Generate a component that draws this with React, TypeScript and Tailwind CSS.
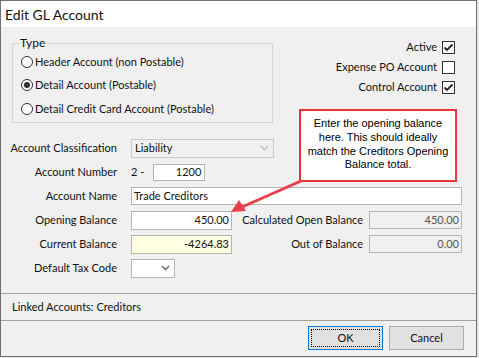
import React from 'react';

const ui = "font-['Lato',sans-serif] text-[11px] text-[#111] whitespace-nowrap";

function Chevron({ color }: { color: string }) {
  return (
    <svg width="9" height="6" viewBox="0 0 9 6" className="shrink-0">
      <path d="M1 1 L4.5 4.5 L8 1" fill="none" stroke={color} strokeWidth="1.6" />
    </svg>
  );
}

function Check({ checked }: { checked: boolean }) {
  return (
    <div className="w-[13px] h-[13px] border border-[#333] bg-white flex items-center justify-center">
      {checked && (
        <svg width="11" height="11" viewBox="0 0 11 11">
          <path d="M1.5 5.5 L4 8 L9.5 2.5" fill="none" stroke="#222" strokeWidth="1.8" />
        </svg>
      )}
    </div>
  );
}

function Radio({ label, selected }: { label: string; selected?: boolean }) {
  return (
    <div className="flex items-center h-[23.5px]">
      <div className="w-[12px] h-[12px] rounded-full border border-[#333] bg-white flex items-center justify-center">
        {selected && <div className="w-[6px] h-[6px] rounded-full bg-[#333]" />}
      </div>
      <span className="ml-[2px]">{label}</span>
    </div>
  );
}

function Row({ label, children }: { label: string; children: React.ReactNode }) {
  return (
    <div className="flex items-center h-[24px]">
      <span className="w-[116px] text-right shrink-0">{label}</span>
      <div className="ml-[14px] flex items-center flex-1">{children}</div>
    </div>
  );
}

export default function App() {
  return (
    <div className={`w-[479px] h-[358px] bg-[#e6e6e6] relative overflow-hidden ${ui}`}>
      <div className="w-[477px] h-[357px] border border-[#707070] bg-[#f0f0f0] flex flex-col">
        {/* title bar */}
        <div className="h-[26px] bg-white flex items-center px-[4px] text-[14px]">Edit GL Account</div>

        {/* main area */}
        <div className="h-[266px] flex flex-col px-[11px]">
          <div className="flex mt-[10px]">
            <fieldset className="w-[261px] h-[86px] border border-[#d6d6d6] pl-[8px] pt-[2px]">
              <legend className="px-[1px] -ml-[2px] leading-[12px] text-[12px]">Type</legend>
              <div className="flex flex-col -mt-[1px]">
                <Radio label="Header Account (non Postable)" />
                <Radio label="Detail Account (Postable)" selected />
                <Radio label="Detail Credit Card Account (Postable)" />
              </div>
            </fieldset>
            <div className="flex-1 flex flex-col items-end pr-[10px]">
              <div className="h-[20px] flex items-center gap-[5px]"><span>Active</span><Check checked /></div>
              <div className="h-[20px] flex items-center gap-[5px]"><span>Expense PO Account</span><Check checked={false} /></div>
              <div className="h-[20px] flex items-center gap-[5px]"><span>Control Account</span><Check checked /></div>
            </div>
          </div>

          {/* form */}
          <div className="flex flex-col mt-[13px] -ml-[11px]">
            <Row label="Account Classification">
              <div className="w-[143px] h-[19px] border border-[#cccccc] bg-[#f0f0f0] flex items-center justify-between pl-[3px] pr-[4px]">
                <span>Liability</span>
                <Chevron color="#c4c4c4" />
              </div>
            </Row>
            <Row label="Account Number">
              <span>2 -</span>
              <div className="ml-[9px] w-[52px] h-[17px] border border-[#b4b4b4] bg-white flex items-center justify-end pr-[3px]">1200</div>
            </Row>
            <Row label="Account Name">
              <div className="w-[331px] h-[18px] border border-[#b4b4b4] bg-white flex items-center pl-[2px]">Trade Creditors</div>
            </Row>
            <Row label="Opening Balance">
              <div className="w-[101px] h-[19px] border border-[#b4b4b4] bg-white flex items-center justify-end pr-[2px]">450.00</div>
              <span className="w-[131px] text-right">Calculated Open Balance</span>
              <div className="ml-[6px] w-[93px] h-[18px] border border-[#b4b4b4] bg-[#f0f0f0] text-[#555] flex items-center justify-end pr-[2px]">450.00</div>
            </Row>
            <Row label="Current Balance">
              <div className="w-[101px] h-[19px] border border-[#b4b4b4] bg-[#ffffe1] flex items-center justify-end pr-[2px]">-4264.83</div>
              <span className="w-[131px] text-right">Out of Balance</span>
              <div className="ml-[6px] w-[93px] h-[18px] border border-[#b4b4b4] bg-[#f0f0f0] text-[#555] flex items-center justify-end pr-[2px]">0.00</div>
            </Row>
            <Row label="Default Tax Code">
              <div className="w-[44px] h-[19px] border border-[#b4b4b4] bg-white flex items-center justify-end pr-[4px]">
                <Chevron color="#707070" />
              </div>
            </Row>
          </div>
        </div>

        {/* linked accounts */}
        <div className="h-[28px] border-t border-b border-[#a0a0a0] flex items-center pl-[11px]">Linked Accounts: Creditors</div>

        {/* buttons */}
        <div className="flex-1 flex justify-end items-start pt-[5px] pr-[12px] gap-[6px]">
          <button className="w-[75px] h-[24px] border border-[#0078d7] bg-[#e1e1e1] p-[2px]">
            <div className="w-full h-full border border-dotted border-black flex items-center justify-center">OK</div>
          </button>
          <button className="w-[75px] h-[24px] border border-[#adadad] bg-[#e1e1e1] flex items-center justify-center">Cancel</button>
        </div>
      </div>

      {/* annotation callout */}
      <div className="absolute left-[299px] top-[109px] w-[158px] h-[73px] border-2 border-[#e8343a] bg-white flex items-center justify-center text-center font-['Liberation_Sans',sans-serif] text-[11px] leading-[13.7px] text-black px-[6px] pb-[2px] whitespace-normal">
        Enter the opening balance here. This should ideally match the Creditors Opening Balance total.
      </div>
      <svg className="absolute left-0 top-0 pointer-events-none" width="479" height="358">
        <line x1="301" y1="181" x2="242" y2="207" stroke="#e8404a" strokeWidth="3" />
        <polygon points="231,212 239,200 246,211" fill="#e8404a" />
      </svg>
    </div>
  );
}
